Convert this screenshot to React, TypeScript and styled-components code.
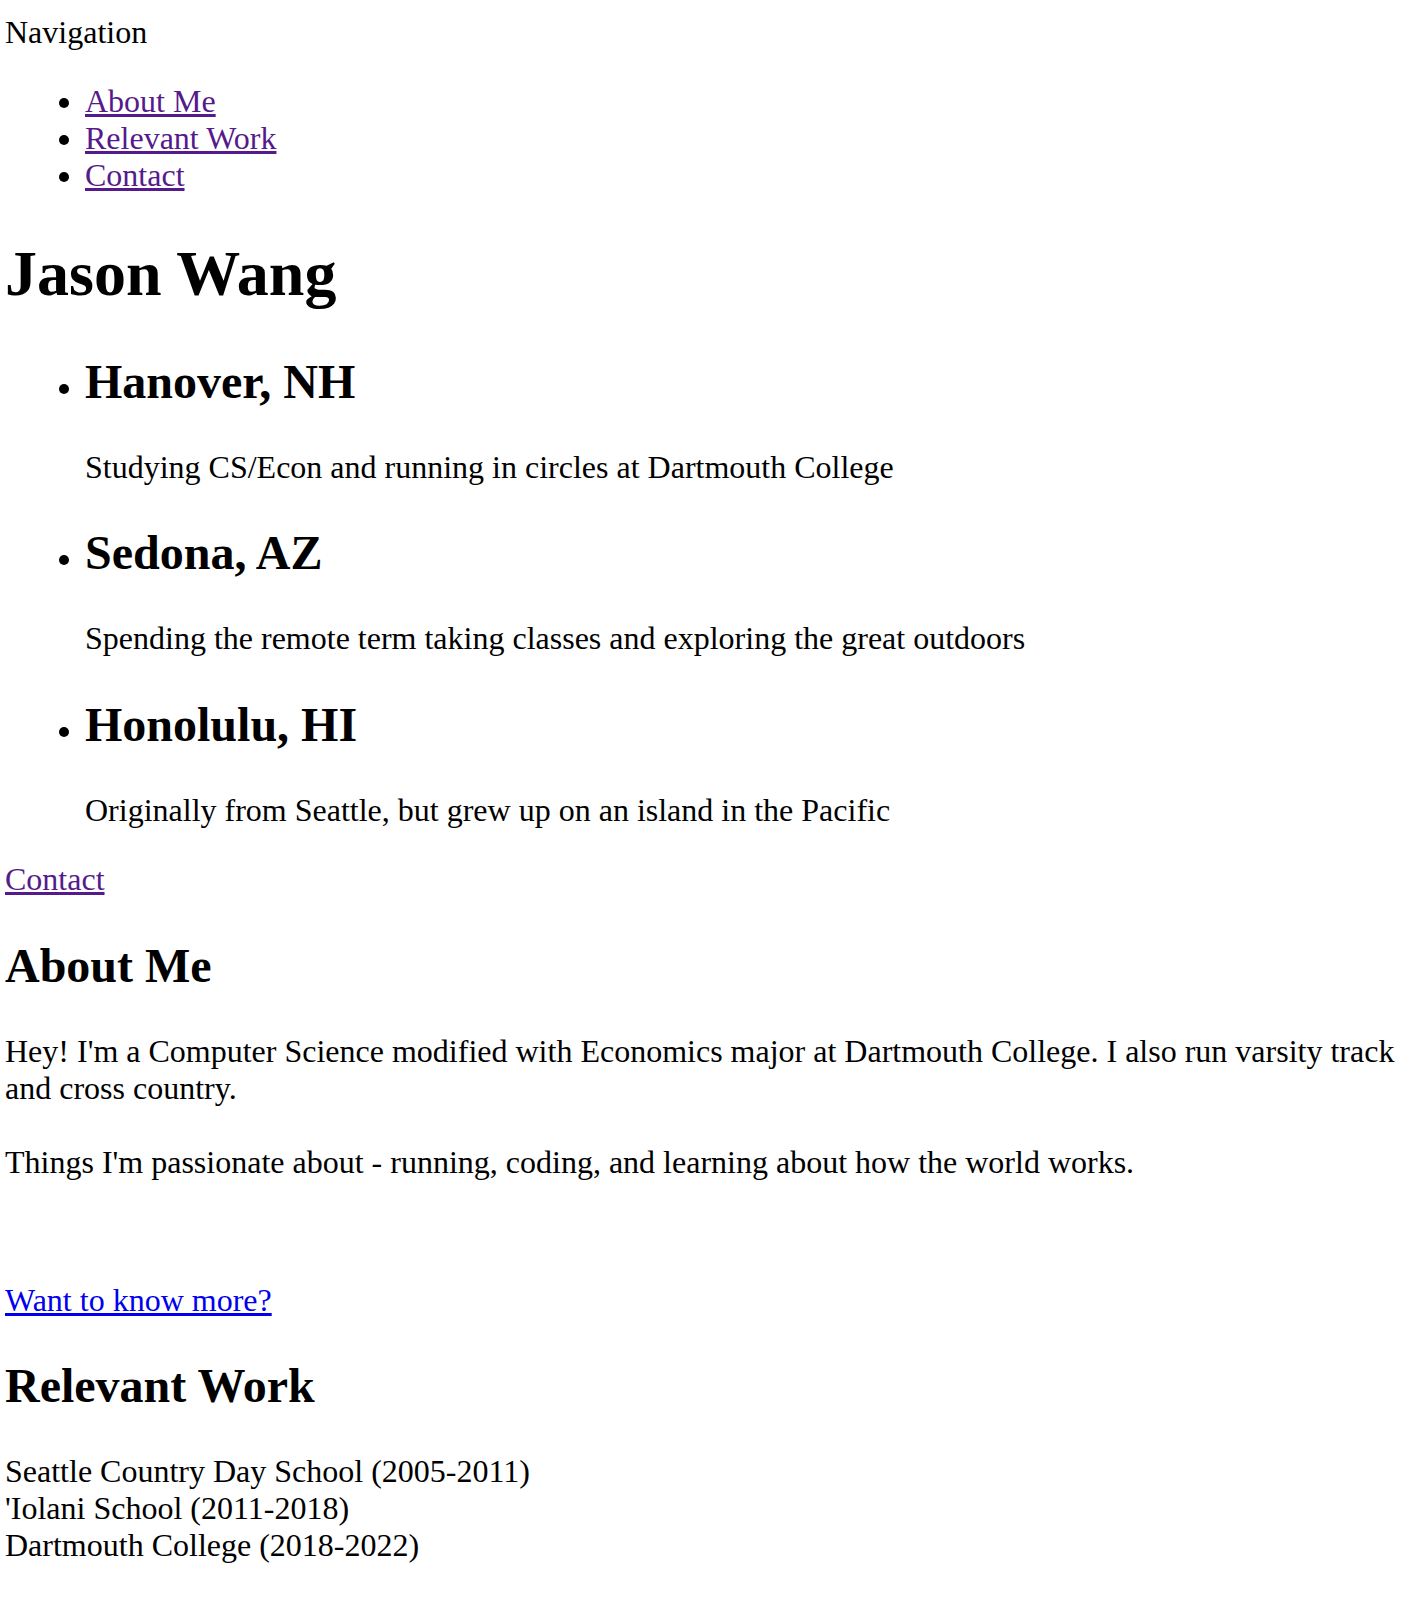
import React from "react";
import styled, { createGlobalStyle } from "styled-components";

const GlobalStyle = createGlobalStyle`
  html, body {
    background: #ffffff;
  }
  body {
    margin: 14px 5px 8px 5px;
    font-family: "Liberation Serif", "Times New Roman", serif;
    font-size: 32px;
    color: #000000;
  }
`;

const Page = styled.div`
  display: flow-root;
`;

const NavLabel = styled.div`
  margin: 0;
`;

const BulletList = styled.ul`
  margin: 32px 0;
  padding-left: 80px;
  list-style: disc outside;
`;

const NavItem = styled.li`
  line-height: normal;
`;

const Link = styled.a<{ $visited?: boolean }>`
  color: ${(p) => (p.$visited ? "#551a8b" : "#0000ee")};
  text-decoration: underline;
  cursor: pointer;
`;

const Name = styled.h1`
  font-size: 64px;
  font-weight: bold;
  margin: 42.88px 0;
`;

const Place = styled.li``;

const Heading = styled.h2`
  font-size: 48px;
  font-weight: bold;
  margin: 39.84px 0;
`;

const Text = styled.p<{ $spaced?: boolean }>`
  margin: ${(p) => (p.$spaced ? "37px" : "32px")} 0 32px 0;
`;

const LinkLine = styled.div``;

const WorkList = styled.ul`
  list-style: none;
  margin: 32px 0;
  padding: 0;
`;

const WorkItem = styled.li``;

const places = [
  { name: "Hanover, NH", text: "Studying CS/Econ and running in circles at Dartmouth College" },
  { name: "Sedona, AZ", text: "Spending the remote term taking classes and exploring the great outdoors" },
  { name: "Honolulu, HI", text: "Originally from Seattle, but grew up on an island in the Pacific" },
];

const work = [
  "Seattle Country Day School (2005-2011)",
  "'Iolani School (2011-2018)",
  "Dartmouth College (2018-2022)",
];

export default function App() {
  return (
    <Page>
      <GlobalStyle />
      <NavLabel>Navigation</NavLabel>
      <BulletList>
        <NavItem><Link $visited href="#about">About Me</Link></NavItem>
        <NavItem><Link $visited href="#work">Relevant Work</Link></NavItem>
        <NavItem><Link $visited href="#contact">Contact</Link></NavItem>
      </BulletList>
      <Name>Jason Wang</Name>
      <BulletList>
        {places.map((p) => (
          <Place key={p.name}>
            <Heading>{p.name}</Heading>
            <Text>{p.text}</Text>
          </Place>
        ))}
      </BulletList>
      <LinkLine>
        <Link $visited href="#contact">Contact</Link>
      </LinkLine>
      <Heading id="about">About Me</Heading>
      <Text>
        Hey! I'm a Computer Science modified with Economics major at Dartmouth College. I also run varsity track and cross country.
      </Text>
      <Text $spaced>
        Things I'm passionate about - running, coding, and learning about how the world works.
      </Text>
      <Text>{"\u00a0"}</Text>
      <Text>
        <Link href="#more">Want to know more?</Link>
      </Text>
      <Heading id="work">Relevant Work</Heading>
      <WorkList>
        {work.map((w) => (
          <WorkItem key={w}>{w}</WorkItem>
        ))}
      </WorkList>
    </Page>
  );
}
